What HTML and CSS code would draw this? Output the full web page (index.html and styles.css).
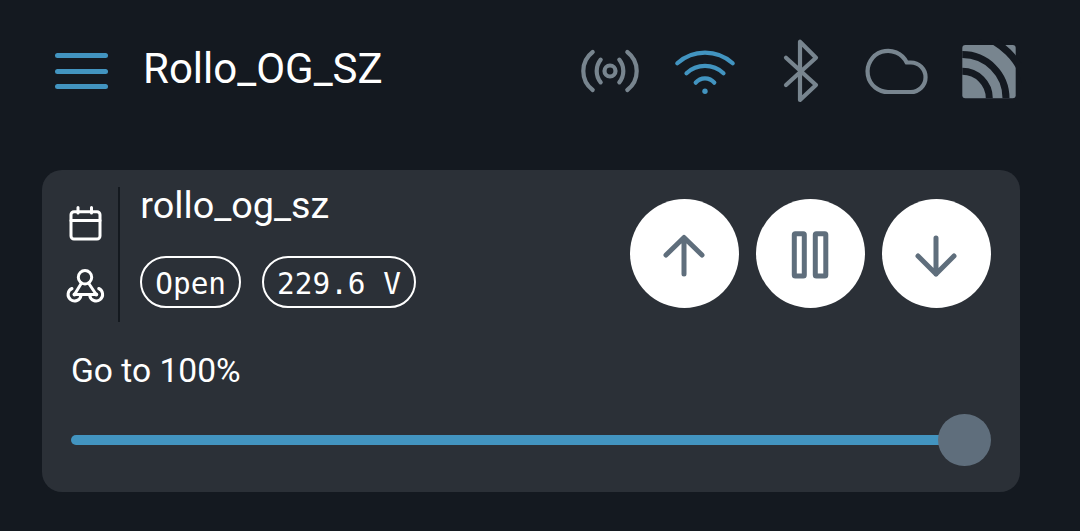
FILE: index.html
```html
<!DOCTYPE html>
<html lang="en">

<head>
    <meta charset="UTF-8">
    <meta name="viewport" content="width=device-width, initial-scale=1.0">
    <title>Rollo_OG_SZ</title>
    <link rel="stylesheet" href="styles.css">
</head>

<body>
    <!-- Header -->
    <header class="topbar">
        <div class="menu-btn">
            <span></span>
            <span></span>
            <span></span>
        </div>
        <h1 class="device-name">Rollo_OG_SZ</h1>
        <div class="status-icons">
            <svg class="status-icon" viewBox="0 0 64 64">
                <circle cx="32" cy="32" r="5.5" />
                <path d="M22.7 20.6A18.2 18.2 0 0 0 22.7 43.4" />
                <path d="M41.3 20.6A18.2 18.2 0 0 1 41.3 43.4" />
                <path d="M14.7 13A23.9 23.9 0 0 0 14.7 51" />
                <path d="M49.3 13A23.9 23.9 0 0 1 49.3 51" />
            </svg>
            <svg class="status-icon active" viewBox="0 0 64 64">
                <path d="M4.3 24.3A41.5 41.5 0 0 1 59.7 24.3" />
                <path d="M13.5 34.3A27 27 0 0 1 50.5 34.3" />
                <path d="M22.7 43.7A12 12 0 0 1 41.3 43.7" />
                <circle class="dot" cx="32" cy="52.3" r="2.7" />
            </svg>
            <svg class="status-icon" viewBox="0 0 64 64">
                <path d="M18 46L48 18.7L32 2.7V61L48 46L18 18.7" />
            </svg>
            <svg class="status-icon" viewBox="0 0 64 64">
                <path d="M26 53A20.6 20.6 0 1 1 43.7 23.5H47.8A14.75 14.75 0 0 1 47.8 53Z" />
            </svg>
            <svg class="status-icon rss" viewBox="0 0 64 64">
                <rect x="4.3" y="6" width="53.4" height="53.3" rx="3" />
                <g>
                    <path d="M4.3 32.3A27 27 0 0 1 31.3 59.3" />
                    <path d="M4.3 15.6A43.7 43.7 0 0 1 48 59.3" />
                    <path d="M4.3 -5.7A65 65 0 0 1 69.3 59.3" />
                </g>
            </svg>
        </div>
    </header>

    <!-- Card -->
    <section class="card">
        <div class="card-top">
            <div class="side-icons">
                <svg class="side-icon" viewBox="0 0 40 40">
                    <rect x="6" y="7.8" width="29" height="27.2" rx="3" />
                    <path d="M6 16.5H35M13 3.5V9M26.5 3.5V9" />
                </svg>
                <svg class="side-icon" viewBox="0 0 40 40">
                    <circle cx="20" cy="11.2" r="6.7" />
                    <path d="M16.5 17L9.5 28.5H31.2L23.5 17" />
                    <path d="M7 22.5A6.5 6.5 0 1 0 16 29.5" />
                    <path d="M24.7 29.5A6.5 6.5 0 1 0 33.7 22.5" />
                    <circle class="node" cx="9.5" cy="28.5" r="2" />
                    <circle class="node" cx="31.2" cy="28.5" r="2" />
                </svg>
            </div>
            <div class="info">
                <div class="entity-name">rollo_og_sz</div>
                <div class="chips">
                    <span class="chip">Open</span>
                    <span class="chip">229.6 V</span>
                </div>
            </div>
            <div class="controls">
                <button class="round-btn">
                    <svg viewBox="0 0 64 64">
                        <path d="M32 16V52M14 33L32 15.5L50 33" />
                    </svg>
                </button>
                <button class="round-btn">
                    <svg viewBox="0 0 64 64">
                        <rect x="16.3" y="11.7" width="10" height="42.3" rx="1" />
                        <rect x="37.3" y="11.7" width="10.5" height="42.3" rx="1" />
                    </svg>
                </button>
                <button class="round-btn">
                    <svg viewBox="0 0 64 64">
                        <path d="M32 16V52M14 34L32 52L50 34" />
                    </svg>
                </button>
            </div>
        </div>

        <!-- Slider -->
        <div class="slider-label">Go to 100%</div>
        <div class="slider">
            <div class="slider-track"></div>
            <div class="slider-thumb"></div>
        </div>
    </section>
</body>

</html>
```

FILE: styles.css
```css
body {
    margin: 0;
    padding: 0;
    background-color: #141920;
    font-family: Roboto, sans-serif;
    color: #fff;
    overflow: hidden;
}

/* Header */
.topbar {
    display: flex;
    align-items: center;
    height: 64px;
    padding: 39px 58px 0 55px;
}

.menu-btn {
    display: flex;
    flex-direction: column;
    gap: 10.5px;
    width: 53px;
}

.menu-btn span {
    display: block;
    height: 5px;
    border-radius: 3px;
    background-color: #4294c0;
}

.device-name {
    margin: 0 0 5px 35px;
    font-size: 42px;
    font-weight: 400;
}

.status-icons {
    display: flex;
    gap: 31px;
    margin-left: auto;
}

.status-icon {
    width: 64px;
    height: 64px;
    overflow: visible;
    fill: none;
    stroke: #78858f;
    stroke-width: 4.2;
    stroke-linecap: round;
    stroke-linejoin: round;
}

.status-icon.active {
    stroke: #4294c0;
}

.status-icon .dot {
    fill: #4294c0;
    stroke: none;
}

.status-icon.rss {
    overflow: hidden;
    stroke: none;
    fill: #78858f;
}

.status-icon.rss g {
    fill: none;
    stroke: #141920;
    stroke-width: 7;
    stroke-linecap: butt;
}

/* Card */
.card {
    width: 978.3px;
    height: 321.5px;
    box-sizing: border-box;
    margin: 67px 0 0 41.7px;
    padding: 17px 29px 25px 23.3px;
    border-radius: 20px;
    background-color: #2b3037;
}

.card-top {
    display: flex;
    align-items: stretch;
    height: 135px;
}

.side-icons {
    display: flex;
    flex-direction: column;
    justify-content: center;
    gap: 22px;
    width: 53px;
    border-right: 2px solid #14191f;
}

.side-icon {
    width: 40px;
    height: 40px;
    fill: none;
    stroke: #fff;
    stroke-width: 3;
    stroke-linecap: round;
    stroke-linejoin: round;
}

.side-icon .node {
    fill: #fff;
    stroke: none;
}

.info {
    padding-left: 20.3px;
}

.entity-name {
    font-size: 37.8px;
    line-height: 36px;
}

.chips {
    display: flex;
    gap: 21px;
    margin-top: 33px;
}

.chip {
    box-sizing: border-box;
    height: 52px;
    padding: 0 13px;
    border: 2px solid #fff;
    border-radius: 26px;
    font-family: "DejaVu Sans Mono", monospace;
    font-size: 29.4px;
    line-height: 52px;
    white-space: nowrap;
}

.controls {
    display: flex;
    align-items: center;
    gap: 17px;
    margin: 0 0 2px auto;
}

.round-btn {
    display: flex;
    align-items: center;
    justify-content: center;
    width: 109px;
    height: 109px;
    padding: 0;
    border: none;
    border-radius: 50%;
    background-color: #fff;
}

.round-btn svg {
    width: 64px;
    height: 64px;
    fill: none;
    stroke: #5f6e7c;
    stroke-width: 5;
    stroke-linecap: round;
    stroke-linejoin: round;
}

/* Slider */
.slider-label {
    margin: 28px 0 0 6px;
    font-size: 33.6px;
    line-height: 42px;
}

.slider {
    display: flex;
    align-items: center;
    height: 52px;
    margin: 22px 0 0 6px;
}

.slider-track {
    flex-grow: 1;
    height: 10px;
    margin-right: -12px;
    border-radius: 5px 0 0 5px;
    background-color: #4294c0;
}

.slider-thumb {
    position: relative;
    width: 52.5px;
    height: 52px;
    border-radius: 50%;
    background-color: #5f6e7c;
}
```
